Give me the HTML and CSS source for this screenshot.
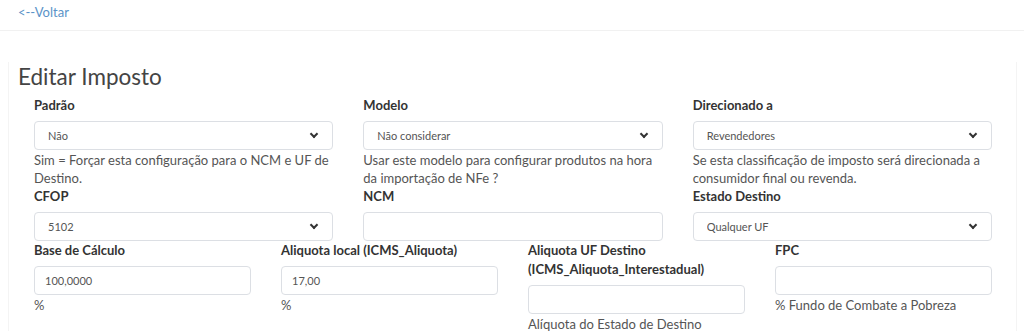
FILE: index.html
```html
<!DOCTYPE html>
<html lang="pt-BR">
<head>
  <meta charset="UTF-8">
  <title>Editar Imposto</title>
  <link rel="stylesheet" href="styles.css">
</head>
<body>
  <div class="top-bar">
    <a href="#" class="back-link">&lt;--Voltar</a>
  </div>

  <div class="card">
    <h3 class="title">Editar Imposto</h3>
    <form id="impostoForm">
      <div class="row row-3">
        <div class="form-group">
          <label>Padrão</label>
          <div class="select-wrap">
            <select id="padrao">
              <option>Não</option>
              <option>Sim</option>
            </select>
          </div>
          <div class="help">Sim = Forçar esta configuração para o NCM e UF de Destino.</div>
        </div>

        <div class="form-group">
          <label>Modelo</label>
          <div class="select-wrap">
            <select id="modelo">
              <option>Não considerar</option>
            </select>
          </div>
          <div class="help">Usar este modelo para configurar produtos na hora da importação de NFe ?</div>
        </div>

        <div class="form-group">
          <label>Direcionado a</label>
          <div class="select-wrap">
            <select id="direcionado">
              <option>Revendedores</option>
              <option>Consumidor final</option>
            </select>
          </div>
          <div class="help">Se esta classificação de imposto será direcionada a consumidor final ou revenda.</div>
        </div>
      </div>

      <div class="row row-3">
        <div class="form-group">
          <label>CFOP</label>
          <div class="select-wrap">
            <select id="cfop">
              <option>5102</option>
            </select>
          </div>
        </div>

        <div class="form-group">
          <label>NCM</label>
          <input type="text" id="ncm">
        </div>

        <div class="form-group">
          <label>Estado Destino</label>
          <div class="select-wrap">
            <select id="estadoDestino">
              <option>Qualquer UF</option>
            </select>
          </div>
        </div>
      </div>

      <div class="row row-4">
        <div class="form-group">
          <label>Base de Cálculo</label>
          <input type="text" id="baseCalculo" value="100,0000">
          <div class="help">%</div>
        </div>

        <div class="form-group">
          <label>Aliquota local (ICMS_Aliquota)</label>
          <input type="text" id="aliquotaLocal" value="17,00">
          <div class="help">%</div>
        </div>

        <div class="form-group">
          <label>Aliquota UF Destino (ICMS_Aliquota_Interestadual)</label>
          <input type="text" id="aliquotaDestino">
          <div class="help">Alíquota do Estado de Destino</div>
        </div>

        <div class="form-group">
          <label>FPC</label>
          <input type="text" id="fpc">
          <div class="help">% Fundo de Combate a Pobreza</div>
        </div>
      </div>
    </form>
  </div>
</body>
</html>
```

FILE: styles.css
```css
* {
  box-sizing: border-box;
}

body {
  margin: 0;
  font-family: Lato, 'Open Sans', sans-serif;
  color: #444;
  background: #fff;
}

.top-bar {
  height: 31px;
  padding: 1px 18px 0;
  border-bottom: 1px solid #f1f1f1;
}

.back-link {
  color: #5a93c8;
  font-size: 13px;
  text-decoration: none;
}

.card {
  margin-left: 8px;
  width: 1009px;
  padding: 0 9px 40px 10px;
  border-left: 1px solid #f4f4f4;
  border-right: 1px solid #f4f4f4;
}

.title {
  margin: 31px 0 4px -1px;
  font-size: 22.5px;
  font-weight: 400;
  line-height: 30px;
  color: #444;
}

.row {
  display: grid;
  column-gap: 30px;
  padding: 0 15px;
}

.row-3 {
  grid-template-columns: repeat(3, 1fr);
}

.row-4 {
  grid-template-columns: repeat(4, 1fr);
}

label {
  display: block;
  margin: 0 0 6px;
  font-size: 13px;
  font-weight: 700;
  line-height: 19px;
  color: #333;
}

input, select {
  width: 100%;
  height: 29px;
  padding: 0 10px;
  border: 1px solid #dcdfe4;
  border-radius: 4px;
  background: #fff;
  font-family: inherit;
  font-size: 11px;
  color: #555;
}

.select-wrap {
  position: relative;
}

select {
  padding-left: 13px;
  appearance: none;
  -webkit-appearance: none;
}

.select-wrap::after {
  content: '';
  position: absolute;
  right: 16px;
  top: 10px;
  width: 4px;
  height: 4px;
  border-right: 2px solid #333;
  border-bottom: 2px solid #333;
  transform: rotate(45deg);
  pointer-events: none;
}

.help {
  margin-top: 1px;
  font-size: 13px;
  line-height: 18px;
  color: #555;
}
```
